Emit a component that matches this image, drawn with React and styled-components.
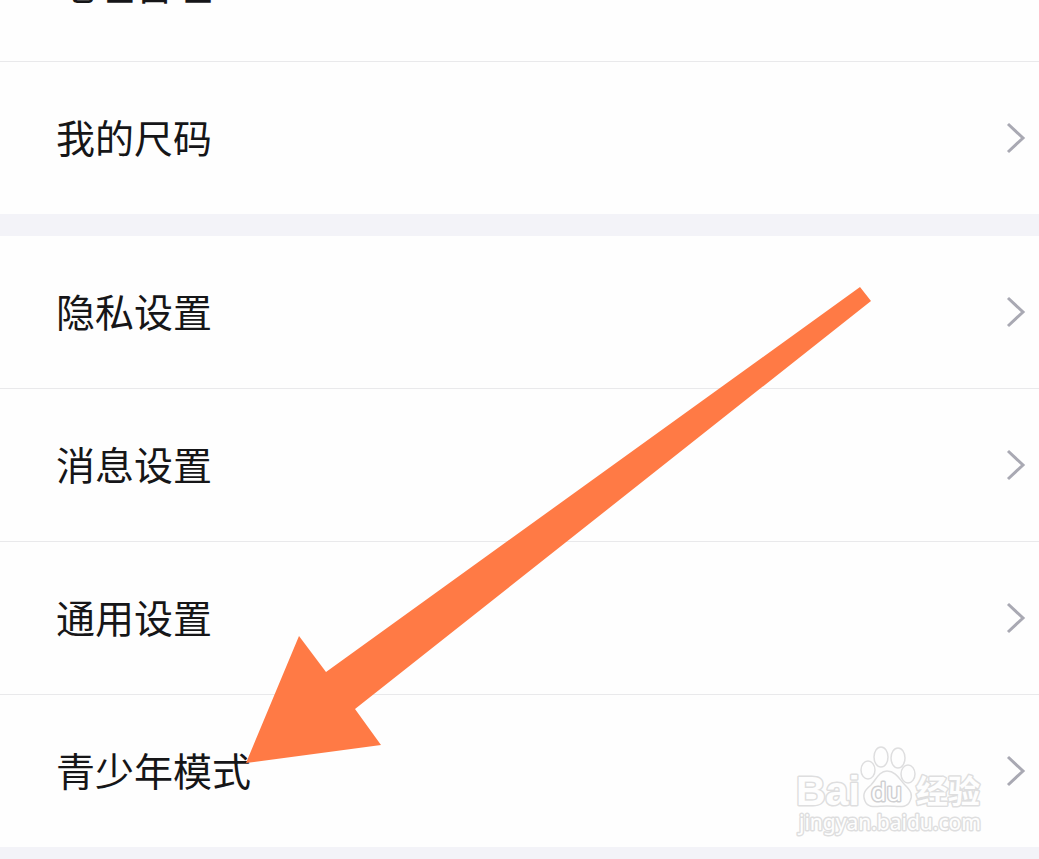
import React from 'react';
import styled, { createGlobalStyle } from 'styled-components';

const GlobalStyle = createGlobalStyle`
  body {
    margin: 0;
    background: #f3f3f8;
    font-family: "Liberation Sans", "Noto Sans CJK SC", sans-serif;
    overflow: hidden;
  }
`;

const Page = styled.main`
  display: flex;
  flex-direction: column;
  gap: 22px;
  margin-top: -91px;
`;

const Group = styled.nav`
  position: relative;
  background: #fefefe;
`;

const Row = styled.a`
  display: flex;
  align-items: center;
  justify-content: space-between;
  height: 152px;
  padding: 0 13px 0 56px;
  color: #161618;
  text-decoration: none;

  & + & {
    border-top: 1px solid #e9e9eb;
  }
`;

const Label = styled.span`
  padding-bottom: 4px;
  font-family: "Noto Sans CJK SC", sans-serif;
  font-size: 39px;
  line-height: 56px;
`;

const Chevron = styled.svg`
  width: 20px;
  height: 32px;
  fill: none;
  stroke: #a9a9b3;
  stroke-width: 3;
`;

const Pointer = styled.svg`
  position: absolute;
  top: 51px;
  left: 246px;
  width: 625px;
  height: 476px;
  fill: #ff7a45;
  pointer-events: none;
`;

const Watermark = styled.svg`
  position: absolute;
  right: 54px;
  bottom: 10px;
  width: 190px;
  height: 92px;
  fill: #fefefe;
  stroke: #dededf;
  stroke-width: 1.5;
  pointer-events: none;

  text {
    paint-order: stroke;
    stroke-width: 3;
    stroke-linejoin: round;
  }
`;

const Brand = styled.text`
  font-family: "Liberation Sans", sans-serif;
  font-size: 41px;
  font-weight: 700;
`;

const BrandInner = styled.text`
  font-family: "Noto Sans", sans-serif;
  font-size: 25px;
  stroke: #cfcfd1;
`;

const BrandSuffix = styled.text`
  font-family: "Noto Sans CJK SC", sans-serif;
  font-size: 32px;
  font-weight: 700;
`;

const Site = styled.text`
  font-family: "Noto Sans", sans-serif;
  font-size: 21px;
`;

const groups = [
  ['地址管理', '我的尺码'],
  ['隐私设置', '消息设置', '通用设置', '青少年模式'],
];

const SettingsRow = ({ label }) => (
  <Row href="#">
    <Label>{label}</Label>
    <Chevron viewBox="0 0 20 32" aria-hidden="true">
      <path d="M2 2 L17 16 L2 30" />
    </Chevron>
  </Row>
);

const BaiduMark = () => (
  <Watermark viewBox="0 0 190 92">
    <Brand x="1" y="60">Bai</Brand>
    <ellipse cx="73" cy="25" rx="7" ry="9" />
    <ellipse cx="86" cy="12" rx="7" ry="10" />
    <ellipse cx="103" cy="13" rx="7" ry="10" />
    <ellipse cx="113" cy="29" rx="7" ry="9" />
    <path d="M92 26 C101 26 105 35 110 40 C116 46 118 50 115 56 C112 64 103 61 92 61 C82 61 73 64 70 56 C67 49 70 45 76 40 C81 35 84 26 92 26Z" />
    <BrandInner x="76" y="56">du</BrandInner>
    <BrandSuffix x="121" y="58">经验</BrandSuffix>
    <Site x="4" y="85">jingyan.baidu.com</Site>
  </Watermark>
);

const App = () => (
  <>
    <GlobalStyle />
    <Page>
      {groups.map((labels, index) => (
        <Group key={labels[0]}>
          {labels.map((label) => (
            <SettingsRow key={label} label={label} />
          ))}
          {index === groups.length - 1 && (
            <>
              <BaiduMark />
              <Pointer viewBox="0 0 625 476" aria-hidden="true">
                <path d="M0 476 L53 349 L80 385 L614 0 L625 14 L109 422 L135 458Z" />
              </Pointer>
            </>
          )}
        </Group>
      ))}
    </Page>
  </>
);

export default App;
